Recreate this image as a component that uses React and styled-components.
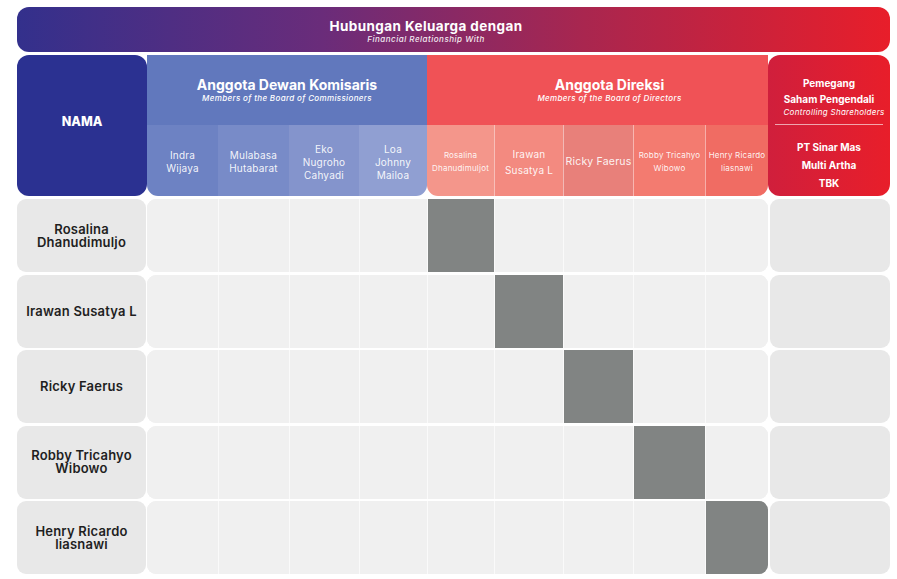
import React from "react";
import styled, { createGlobalStyle } from "styled-components";

const GlobalStyle = createGlobalStyle`
  body {
    margin: 0;
    background: #ffffff;
    font-family: "Inter", "Noto Sans", sans-serif;
  }
`;

// lebar kolom isi tabel, sama dengan sub-header
const COLS = [71, 71, 70, 68, 67, 69, 70, 72, 63];

const commissioners = [
  { name: ["Indra", "Wijaya"], bg: "#6d82c3" },
  { name: ["Mulabasa", "Hutabarat"], bg: "#788bc8" },
  { name: ["Eko", "Nugroho", "Cahyadi"], bg: "#8494cc" },
  { name: ["Loa", "Johnny", "Mailoa"], bg: "#909fd2" },
];

const directors = [
  { name: ["Rosalina", "Dhanudimuljot"], bg: "#f4968b", size: 8 },
  { name: ["Irawan", "Susatya L"], bg: "#f38a80", size: 10 },
  { name: ["Ricky Faerus"], bg: "#e8807a", size: 10.5 },
  { name: ["Robby Tricahyo", "Wibowo"], bg: "#f37b70", size: 8 },
  { name: ["Henry Ricardo", "liasnawi"], bg: "#f06c63", size: 8 },
];

const people = [
  "Rosalina Dhanudimuljo",
  "Irawan Susatya L",
  "Ricky Faerus",
  "Robby Tricahyo Wibowo",
  "Henry Ricardo liasnawi",
];

const Page = styled.div`
  width: 873px;
  padding: 7px 0 0 17px;
  display: flex;
  flex-direction: column;
  gap: 3px;
`;

const Banner = styled.div`
  height: 45px;
  border-radius: 12px;
  background: linear-gradient(90deg, #33308c 0%, #6a2c7a 35%, #a9264f 65%, #e81e2a 100%);
  color: #fff;
  display: flex;
  flex-direction: column;
  align-items: center;
  justify-content: center;
  padding: 4px 55px 0 0;
  box-sizing: border-box;
`;

const BannerTitle = styled.div`
  font-size: 13.5px;
  font-weight: 700;
  line-height: 16px;
  letter-spacing: 0.4px;
`;

const BannerSub = styled.div`
  font-size: 8px;
  font-style: italic;
  font-weight: 500;
  line-height: 11px;
  letter-spacing: 0.5px;
  opacity: 0.9;
`;

const HeaderRow = styled.div`
  display: flex;
  height: 141px;
`;

const NamaHead = styled.div`
  width: 130px;
  background: #2b3191;
  border-radius: 12px;
  color: #fff;
  font-size: 12.5px;
  font-weight: 800;
  display: flex;
  align-items: center;
  justify-content: center;
  padding-bottom: 8px;
  box-sizing: border-box;
`;

const Group = styled.div`
  width: ${(p) => p.w}px;
  display: flex;
  flex-direction: column;
  border-radius: 0 0 11px 11px;
  overflow: hidden;
`;

const GroupTop = styled.div`
  height: 70px;
  background: ${(p) => p.bg};
  color: #fff;
  display: flex;
  flex-direction: column;
  align-items: center;
  justify-content: center;
  padding-left: ${(p) => p.shift || 0}px;
  box-sizing: border-box;
`;

const GroupTitle = styled.div`
  font-size: 14px;
  font-weight: 700;
  line-height: 17px;
`;

const GroupSub = styled.div`
  font-size: 8px;
  font-style: italic;
  font-weight: 500;
  line-height: 11px;
  letter-spacing: 0.35px;
`;

const SubRow = styled.div`
  flex: 1;
  display: flex;
`;

const SubCell = styled.div`
  width: ${(p) => p.w}px;
  background: ${(p) => p.bg};
  color: rgba(255, 255, 255, 0.92);
  font-size: ${(p) => p.size || 10}px;
  line-height: ${(p) => (p.size ? p.size * 1.6 : 13)}px;
  display: flex;
  flex-direction: column;
  align-items: center;
  justify-content: center;
  text-align: center;
  white-space: nowrap;
  letter-spacing: 0.2px;
  padding-top: 3px;
  border-left: ${(p) => (p.line ? "1px solid rgba(255,255,255,0.45)" : "none")};
  box-sizing: border-box;
`;

const ShareHead = styled.div`
  width: 122px;
  border-radius: 12px;
  background: linear-gradient(90deg, #d01f3c 0%, #e81e2a 100%);
  color: #fff;
  display: flex;
  flex-direction: column;
  align-items: center;
  padding: 0 7px;
  box-sizing: border-box;
`;

const ShareTop = styled.div`
  height: 70px;
  width: 100%;
  display: flex;
  flex-direction: column;
  align-items: center;
  justify-content: flex-end;
  padding-bottom: 6px;
  box-sizing: border-box;
  border-bottom: 1px solid rgba(255, 255, 255, 0.6);
`;

const ShareBold = styled.div`
  font-size: 10px;
  font-weight: 700;
  line-height: ${(p) => p.lh || 14}px;
  white-space: nowrap;
`;

const ShareItalic = styled.div`
  font-size: 8px;
  font-style: italic;
  line-height: 12px;
  white-space: nowrap;
  letter-spacing: 0.3px;
  margin-right: -10px;
`;

const ShareBottom = styled.div`
  flex: 1;
  display: flex;
  flex-direction: column;
  align-items: center;
  justify-content: center;
  padding-top: 8px;
`;

const Body = styled.div`
  display: flex;
  flex-direction: column;
  gap: 2.5px;
`;

const Row = styled.div`
  display: flex;
  height: 73px;
`;

const NameCell = styled.div`
  width: 129px;
  margin-right: 1px;
  background: #e8e8e8;
  border-radius: 9px;
  display: flex;
  align-items: center;
  justify-content: center;
  text-align: center;
  padding: 0 6px;
  box-sizing: border-box;
  color: #1f1f1f;
  font-size: 13px;
  font-weight: 600;
  line-height: 13px;
  letter-spacing: 0.2px;
`;

const Grid = styled.div`
  display: flex;
  border-radius: 9px;
  overflow: hidden;
  background: #f0f0f0;
`;

const Cell = styled.div`
  width: ${(p) => p.w}px;
  background: ${(p) => (p.filled ? "#818483" : "#f0f0f0")};
  border-left: ${(p) => (p.first ? "none" : "1px solid #fafafa")};
  box-sizing: border-box;
`;

const ShareCell = styled.div`
  width: 120px;
  margin-left: 2px;
  background: #e8e8e8;
  border-radius: 9px;
`;

export default function App() {
  return (
    <>
      <GlobalStyle />
      <Page>
        <Banner>
          <BannerTitle>Hubungan Keluarga dengan</BannerTitle>
          <BannerSub>Financial Relationship With</BannerSub>
        </Banner>

        <HeaderRow>
          <NamaHead>NAMA</NamaHead>

          <Group w={280}>
            <GroupTop bg="#6178bd">
              <GroupTitle>Anggota Dewan Komisaris</GroupTitle>
              <GroupSub>Members of the Board of Commissioners</GroupSub>
            </GroupTop>
            <SubRow>
              {commissioners.map((c, i) => (
                <SubCell key={i} w={COLS[i]} bg={c.bg}>
                  {c.name.map((n) => (
                    <span key={n}>{n}</span>
                  ))}
                </SubCell>
              ))}
            </SubRow>
          </Group>

          <Group w={341}>
            <GroupTop bg="#f05256" shift={24}>
              <GroupTitle>Anggota Direksi</GroupTitle>
              <GroupSub>Members of the Board of Directors</GroupSub>
            </GroupTop>
            <SubRow>
              {directors.map((d, i) => (
                <SubCell
                  key={i}
                  w={COLS[i + 4]}
                  bg={d.bg}
                  size={d.size}
                  line={i > 0}
                >
                  {d.name.map((n) => (
                    <span key={n}>{n}</span>
                  ))}
                </SubCell>
              ))}
            </SubRow>
          </Group>

          <ShareHead>
            <ShareTop>
              <ShareBold lh={18}>Pemegang</ShareBold>
              <ShareBold>Saham Pengendali</ShareBold>
              <ShareItalic>Controlling Shareholders</ShareItalic>
            </ShareTop>
            <ShareBottom>
              <ShareBold lh={18}>PT Sinar Mas</ShareBold>
              <ShareBold lh={18}>Multi Artha</ShareBold>
              <ShareBold lh={18}>TBK</ShareBold>
            </ShareBottom>
          </ShareHead>
        </HeaderRow>

        <Body>
          {people.map((p, r) => (
            <Row key={p}>
              <NameCell>{p}</NameCell>
              <Grid>
                {COLS.map((w, c) => (
                  <Cell key={c} w={w} first={c === 0} filled={c === r + 4} />
                ))}
              </Grid>
              <ShareCell />
            </Row>
          ))}
        </Body>
      </Page>
    </>
  );
}
